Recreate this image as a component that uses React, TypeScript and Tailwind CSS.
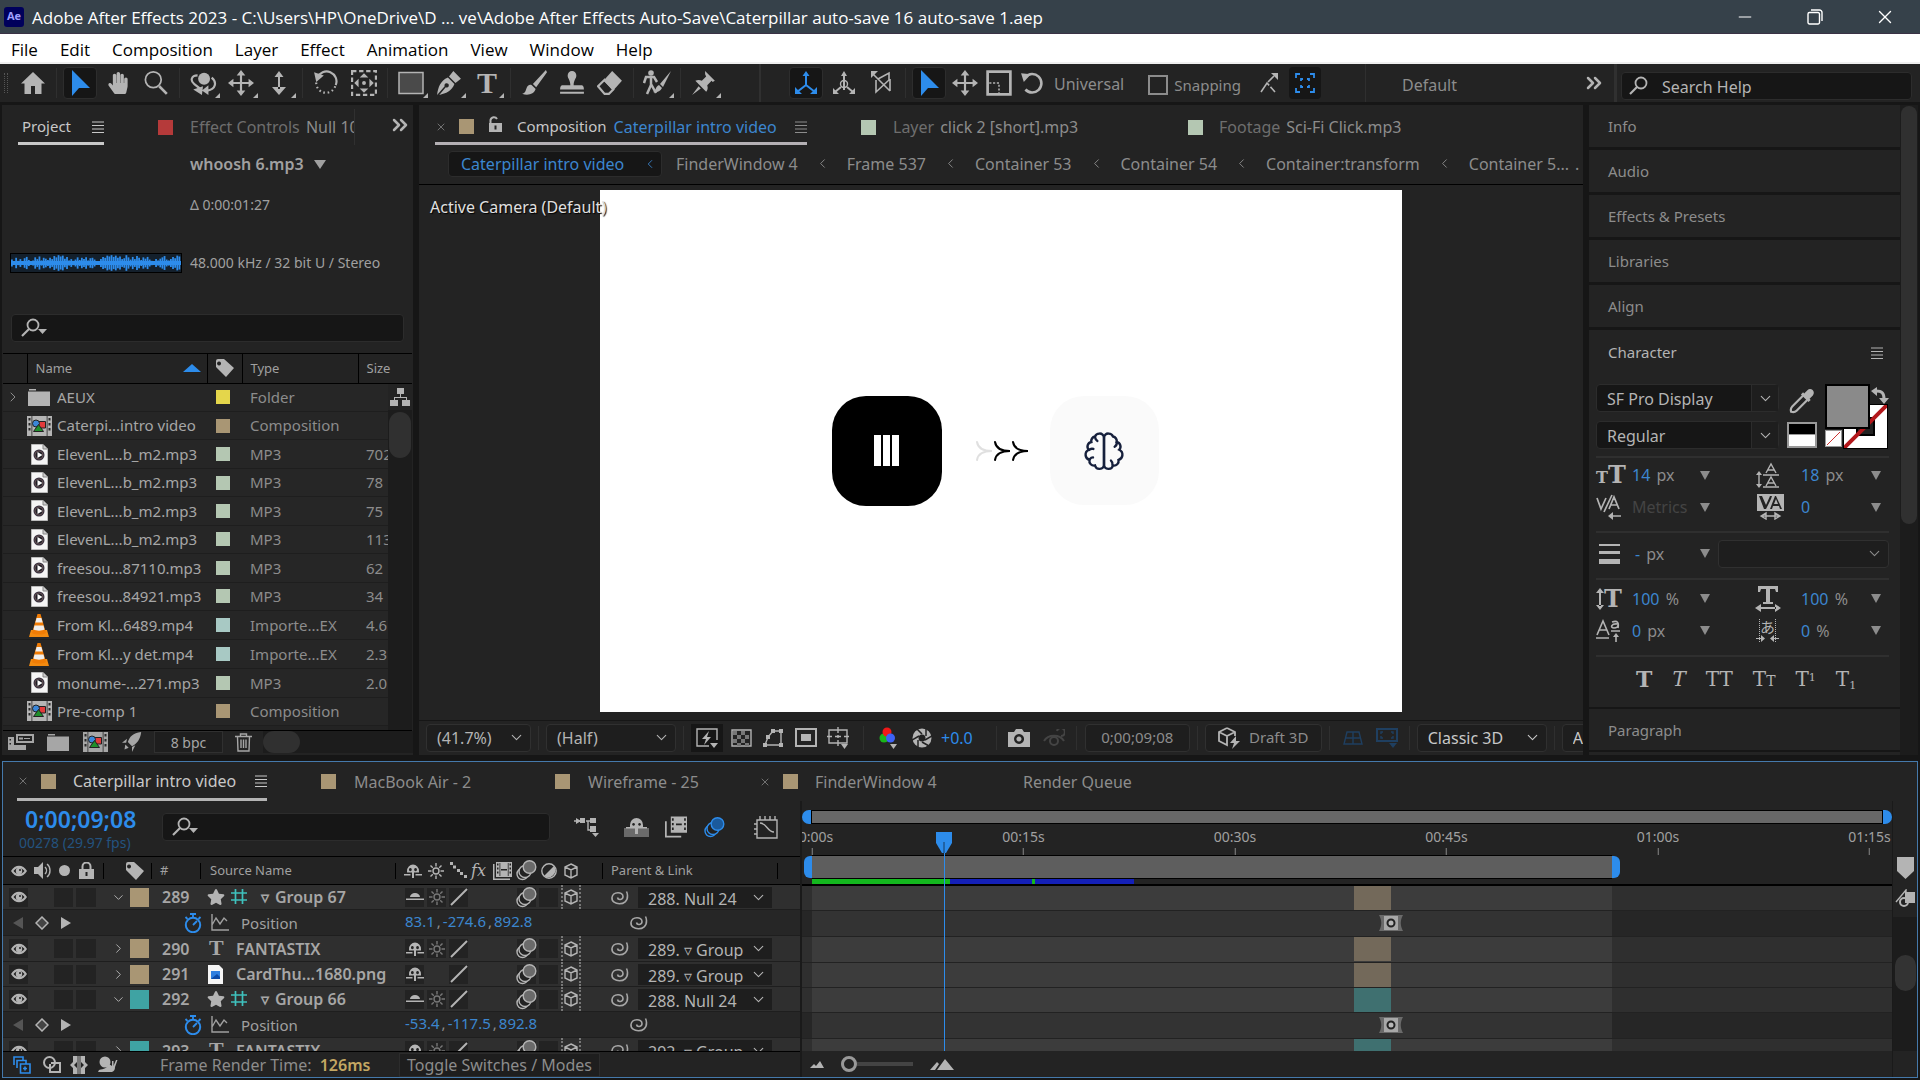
import React from 'react';
import { ChevronDown, ChevronLeft, ChevronRight, ChevronsRight, Minus, X } from 'lucide-react';
import { FaHandPaper, FaStar } from 'react-icons/fa';

type SvgProps = { w?: number; h?: number; box?: string; className?: string; children: React.ReactNode };

const Svg = ({ w = 24, h = w, box = '0 0 24 24', className = '', children }: SvgProps) => (
  <svg width={w} height={h} viewBox={box} fill="currentColor" className={`shrink-0 ${className}`} aria-hidden="true">
    {children}
  </svg>
);

const line = { fill: 'none', stroke: 'currentColor', strokeWidth: 2 };
const thin = { fill: 'none', stroke: 'currentColor', strokeWidth: 1.4 };

/* ---------- icons ---------- */

const ArrowIcon = () => (
  <Svg w={24} h={26} box="0 0 24 26">
    <path d="M4 0v26l7-8h11z" />
  </Svg>
);
const RotateIcon = () => (
  <Svg w={26} h={26}>
    <path d="M5 6.5A8.5 8.5 0 1 1 5 18" {...line} strokeWidth="2.4" />
    <path d="M1 3l9 1-6.500 7z" />
  </Svg>
);
const MoveIcon = () => (
  <Svg w={26} h={26}>
    <path d="M12 3v18M3 12h18" {...line} />
    <path d="M12 0l4 5H8zM12 24l4-5H8zM0 12l5-4v8zM24 12l-5-4v8z" />
  </Svg>
);
const SearchIcon = ({ menu = false }: { menu?: boolean }) => (
  <Svg w={28} h={20} box="0 0 28 20" className="text-[#b4b4b4]">
    <circle cx="13" cy="7" r="5.500" {...line} strokeWidth="1.800" />
    <path d="M9 11l-7 7" {...line} strokeWidth="2.200" />
    {menu && <path d="M18 11h9l-4.500 5z" />}
  </Svg>
);
const MenuIcon = () => (
  <Svg w={12} h={12} box="0 0 12 12">
    <path d="M0 .5h12v1H0zM0 4h12v1H0zM0 7.500h12v1H0zM0 11h12v1H0z" />
  </Svg>
);
const TagIcon = () => (
  <Svg w={20} h={20} box="0 0 20 20" className="text-[#b4b4b4]">
    <path fillRule="evenodd" d="M1 3a2 2 0 0 1 2-2h6l10 9-8 9L1 9zm3 .500a2 2 0 1 0 .1 0z" />
  </Svg>
);
const EyeIcon = () => (
  <Svg w={16} h={12} box="0 0 16 12">
    <path fillRule="evenodd" d="M0 6c4-7 12-7 16 0-4 7-12 7-16 0zm2.500 0c3 4 8 4 11 0-3-4-8-4-11 0z" />
    <circle cx="8" cy="6" r="3.200" />
    <circle cx="9" cy="5" r="1" fill="#222" />
  </Svg>
);
const LockIcon = () => (
  <Svg w={15} h={17} box="0 0 15 17">
    <path d="M3.500 8V4.500a4 4 0 0 1 8 0V8" {...line} />
    <path fillRule="evenodd" d="M0 7h15v10H0zm6.500 3v4h2v-4z" />
  </Svg>
);
const UnlockIcon = () => (
  <Svg w={15} h={17} box="0 0 15 17">
    <path d="M2.500 7V4a3.500 3.500 0 0 1 6.500-1" {...line} />
    <path fillRule="evenodd" d="M1 7h13v9H1zm5.500 2.500v4h2v-4z" />
  </Svg>
);
const ShyIcon = ({ down = false }: { down?: boolean }) =>
  down ? (
    <Svg w={18} h={16} box="0 0 18 16">
      <path d="M0 9.500h18V11H0zM4 8a5 4 0 0 1 10 0z" />
    </Svg>
  ) : (
    <Svg w={18} h={16} box="0 0 18 16">
      <path fillRule="evenodd" d="M3 8a6 6.500 0 0 1 12 0v1.500h-5V15H8V9.500H3zm3.300-3a1.400 1.600 0 1 0 .1 0zm5.200 0a1.400 1.600 0 1 0 .1 0z" />
      <path d="M0 11h6.500v1.500H0zM11.500 11H18v1.500h-6.500z" />
    </Svg>
  );
const SunIcon = () => (
  <Svg w={16} h={16} box="0 0 16 16">
    <circle cx="8" cy="8" r="3" {...thin} />
    <path d="M8 0v3.500M8 12.500V16M0 8h3.500M12.500 8H16M2.500 2.500l2.300 2.300M11.200 11.200l2.300 2.300M13.500 2.500l-2.300 2.300M4.800 11.200l-2.300 2.300" {...thin} />
  </Svg>
);
const SlashIcon = () => (
  <Svg w={18} h={18} box="0 0 18 18">
    <path d="M1 17L17 1" {...line} />
  </Svg>
);
const BlurIcon = ({ blue = false }: { blue?: boolean }) => (
  <Svg w={21} h={21} box="0 0 21 21">
    <circle cx="6.500" cy="14" r="5.500" {...thin} />
    <circle cx="9" cy="11.500" r="6" {...thin} fill="#222" />
    <circle cx="13.500" cy="7" r="6.300" {...thin} fill={blue ? '#1b5a9c' : '#6a6a6a'} />
  </Svg>
);
const CubeIcon = () => (
  <Svg w={16} h={16} box="0 0 16 16">
    <path d="M8 1l6 3v8l-6 3-6-3V4zM2 4l6 3 6-3M8 7v8" {...thin} />
  </Svg>
);
const FilmIcon = () => (
  <Svg w={19} h={18} box="0 0 19 18">
    <path d="M0 2h1.500v14.500H17V18H0z" />
    <path fillRule="evenodd" d="M3 0h16v15H3zm1 1.500v2h1.500v-2zm0 4v2h1.500v-2zm0 4v2h1.500v-2zM16.500 1.500v2H18v-2zm0 4v2H18v-2zm0 4v2H18v-2zM8 7v1.500h6V7z" />
    <path d="M6.500 1h.800v13h-.800zM14.800 1h.800v13h-.800z" fill="#232323" />
  </Svg>
);
const WhipIcon = () => (
  <Svg w={19} h={17} box="0 0 19 17" className="text-[#a6a6a6]">
    <path d="M7.500 8.500c.500 3 5.500 2.500 5.500-1C13 2.500 3 2 2 8.500 1 16.500 18 18 17.500 6.500c0-1.500-.5-3-1-4" {...thin} strokeWidth="1.600" />
  </Svg>
);
const FolderIcon = () => (
  <Svg w={22} h={17} box="0 0 22 17">
    <path d="M1 0h7v1.500H1zM0 2.500h22V17H0z" />
  </Svg>
);
const CompIcon = () => (
  <Svg w={25} h={20} box="0 0 25 20">
    <path d="M0 0h25v20H0z" />
    <path d="M1.500 2h2v2.500h-2zM1.500 7h2v2.500h-2zM1.500 12h2v2.500h-2zM21.500 2h2v2.500h-2zM21.500 7h2v2.500h-2zM21.500 12h2v2.500h-2zM4.500 0h.800v20h-.800zM19.700 0h.800v20h-.800z" fill="#2a2a2a" />
    <path d="M11 5.500h7.500V12H11z" fill="#e23b3b" stroke="#222" />
    <circle cx="9" cy="7.500" r="3.500" fill="#3a86d8" stroke="#222" />
    <path d="M11.500 8.500l5 7h-10z" fill="#1f8f2c" stroke="#222" />
  </Svg>
);
const Mp3Icon = () => (
  <Svg w={17} h={21} box="0 0 17 21">
    <path d="M.5.5H12L16.500 5v15.500H.5z" fill="#f5f5f5" stroke="#bbb" />
    <path d="M12 .5V5h4.500" fill="#ccc" stroke="#888" />
    <circle cx="8" cy="11" r="5.500" fill="#39323f" />
    <circle cx="8" cy="11" r="4" fill="#1f1f26" stroke="#8b6b6b" strokeWidth=".6" />
    <path d="M6.500 8l5 3-5 3z" fill="#fff" />
  </Svg>
);
const ConeIcon = () => (
  <Svg w={20} h={23} box="0 0 20 23">
    <path d="M2 16h16l2 7H0z" fill="#f28a10" />
    <path d="M8.500 0h3L17 19c-3 2-11 2-14 0z" fill="#f07c05" />
    <path d="M7.600 4h4.800l1.300 4.500H6.300zM5.500 11.500h9l1 4c-3 1.500-8 1.500-11 0z" fill="#eee" />
  </Svg>
);
const PngIcon = () => (
  <Svg w={15} h={19} box="0 0 15 19">
    <path d="M0 0h11l4 4v15H0z" fill="#f5f5f5" />
    <path d="M3 6h9v8H3z" fill="#2f7fe0" />
    <path d="M3 14l6-5 3 3v2z" fill="#0b4aa8" />
  </Svg>
);
const HashIcon = () => (
  <Svg w={16} h={16} box="0 0 16 16" className="text-[#3fc1bd]">
    <path d="M4.500 0v15M11.500 0v15M0 4h16M0 11h16" {...line} strokeWidth="1.700" />
  </Svg>
);
const StopwatchIcon = () => (
  <Svg w={18} h={20} box="0 0 18 20" className="text-[#2d8ceb]">
    <circle cx="9" cy="12" r="7.200" {...line} />
    <path d="M9 12l4-4M6 1h6M9 1v4M1.500 4l2 2M16.500 4l-2 2" {...line} strokeWidth="1.800" />
  </Svg>
);
const GraphIcon = () => (
  <Svg w={18} h={17} box="0 0 18 17">
    <path d="M1 0v16h17M1 11l4-7 4 6 4-6 3 3" {...thin} />
  </Svg>
);
const TypeIcon = ({ className = 'text-[20px]' }: { className?: string }) => (
  <span className={`font-['Liberation_Serif',serif] font-bold leading-none ${className}`}>T</span>
);
const Brain = () => (
  <Svg w={44} h={44} className="text-[#16203c]">
    <g fill="none" stroke="currentColor" strokeWidth="1.300" strokeLinecap="round">
      <path d="M9.500 2.500A2.300 2.300 0 0 1 12 4.700v14.800a2.500 2.500 0 0 1-4.900.4 2.500 2.500 0 0 1-3-3 3 3 0 0 1-.4-5.600 2.500 2.500 0 0 1 1.400-4.200 2.500 2.500 0 0 1 2-3A2.500 2.500 0 0 1 9.500 2.500z" />
      <path d="M14.500 2.500A2.300 2.300 0 0 0 12 4.700v14.800a2.500 2.500 0 0 0 4.900.4 2.500 2.500 0 0 0 3-3 3 3 0 0 0 .4-5.600 2.500 2.500 0 0 0-1.400-4.200 2.500 2.500 0 0 0-2-3A2.500 2.500 0 0 0 14.500 2.500z" />
      <path d="M7.100 4.500c.2 1 .6 1.600 1.300 2M3.700 11.500c.8-.7 1.600-.9 2.500-.6M4.200 16.500c.6-.7 1-1 1.800-1M19 7.200c.1 1.300-.3 2-1.200 2.500M16.600 19.500c.2-1-.1-1.700-.8-2.300" />
    </g>
  </Svg>
);

/* ---------- small shared parts ---------- */

const Swatch = ({ className }: { className: string }) => <span className={`inline-block size-[15px] shrink-0 ${className}`} />;
const Sep = ({ className = 'h-[30px]' }: { className?: string }) => <span className={`w-px shrink-0 bg-[#2f2f2f] ${className}`} />;

const Tool = ({ label, active, more, children }: { label: string; active?: boolean; more?: boolean; children: React.ReactNode }) => (
  <button aria-label={label} className="relative flex h-[34px] w-[38px] shrink-0 items-center justify-center">
    <span className={`flex h-8 w-[34px] items-center justify-center rounded-sm ${active ? 'border border-[#2d2d2d] bg-[#161616] text-[#2d8ceb]' : ''}`}>
      {children}
    </span>
    {more && (
      <Svg w={5} h={5} box="0 0 5 5" className="absolute right-0.5 bottom-0.5">
        <path d="M5 0v5H0z" />
      </Svg>
    )}
  </button>
);
const ToolSep = () => (
  <span className="flex w-[9px] shrink-0 justify-center">
    <Sep />
  </span>
);

const Drop = ({ label, value, className = '', split = false }: { label: string; value: string; className?: string; split?: boolean }) => (
  <span className={`relative flex items-center ${className}`}>
    <select aria-label={label} className="h-full w-full appearance-none overflow-hidden bg-transparent pr-7 pl-2.5 text-clip outline-none">
      <option>{value}</option>
    </select>
    <span
      className={`pointer-events-none absolute inset-y-0 right-0 flex w-[27px] items-center justify-center ${split ? 'border-l border-[#2c2c2c] bg-[#1e1e1e]' : ''}`}
    >
      <ChevronDown size={17} strokeWidth={1.5} />
    </span>
  </span>
);

/* ---------- title, menu, toolbar ---------- */

const menus = ['File', 'Edit', 'Composition', 'Layer', 'Effect', 'Animation', 'View', 'Window', 'Help'];

const TitleBar = () => (
  <header className="flex h-[34px] shrink-0 items-center border-b border-[#3a3245] bg-[#36414a] font-['Open_Sans','Noto_Sans',sans-serif] text-[17px] text-white">
    <span className="mr-2 ml-1 flex h-5 w-5 items-center justify-center rounded-[3px] bg-[#00005b] text-[11px] font-bold text-[#9f9fff]">Ae</span>
    <span className="pt-0.5 whitespace-nowrap">
      Adobe After Effects 2023 - C:\Users\HP\OneDrive\D ... ve\Adobe After Effects Auto-Save\Caterpillar auto-save 16 auto-save 1.aep
    </span>
    <div className="ml-auto flex items-center">
      <button aria-label="Minimize" className="flex w-[70px] justify-center"><Minus size={20} strokeWidth={1.2} /></button>
      <button aria-label="Restore" className="flex w-[70px] justify-center">
        <Svg w={16} h={16} box="0 0 16 16">
          <path d="M1 5a1.500 1.500 0 0 1 1.500-1.500H11A1.500 1.500 0 0 1 12.500 5v8.500A1.500 1.500 0 0 1 11 15H2.500A1.500 1.500 0 0 1 1 13.500zM4 1h8.500A2.500 2.500 0 0 1 15 3.500V12" {...thin} />
        </Svg>
      </button>
      <button aria-label="Close" className="flex w-[70px] justify-center"><X size={22} strokeWidth={1.5} /></button>
    </div>
  </header>
);

const MenuBar = () => (
  <nav className="flex h-[30px] shrink-0 items-center border-b-2 border-[#efefef] bg-white pt-1 font-['Open_Sans','Noto_Sans',sans-serif] text-[17px] text-black">
    {menus.map((m) => (
      <button key={m} className="px-[11px]">{m}</button>
    ))}
  </nav>
);

const Toolbar = () => (
  <div className="flex h-[38px] shrink-0 items-center bg-[#232323] text-[#b4b4b4]">
    <span className="mr-1.5 ml-1 h-5 w-1 border-x border-dotted border-[#555]" />
    <Tool label="Home">
      <Svg w={26} h={24}><path d="M12 1L0 12.500h3.500V23H10v-8h4v8h6.500V12.500H24z" /></Svg>
    </Tool>
    <ToolSep />
    <Tool label="Selection" active><ArrowIcon /></Tool>
    <Tool label="Hand"><FaHandPaper size={22} /></Tool>
    <Tool label="Zoom">
      <Svg w={26} h={26}>
        <circle cx="9.500" cy="9" r="7.300" {...line} strokeWidth="1.600" />
        <path d="M15 15l7 7" {...line} strokeWidth="2.400" />
      </Svg>
    </Tool>
    <ToolSep />
    <Tool label="Orbit" more>
      <Svg w={28} h={26}>
        <circle cx="13" cy="8" r="5.500" />
        <path d="M7 5C1 5 0 10 4 13l5 4M20 7c5 4 4 11-4 12" {...line} />
        <path d="M3 18l9-3-1 8zM17 14v9l-6-4z" />
      </Svg>
    </Tool>
    <Tool label="Pan camera" more><MoveIcon /></Tool>
    <Tool label="Dolly" more>
      <Svg w={24} h={26}>
        <path d="M11 4h2v14h-2zM12 0l4.500 6h-9zM12 24l7-8H5z" />
      </Svg>
    </Tool>
    <ToolSep />
    <Tool label="Rotate">
      <Svg w={26} h={26}>
        <path d="M4 7a9 9 0 0 1 17 7" {...line} />
        <path d="M20.500 15A9 9 0 0 1 3.500 9" {...line} strokeDasharray="1.500 2.500" />
        <path d="M1 2l9 3-7 6z" />
      </Svg>
    </Tool>
    <Tool label="Anchor point">
      <Svg w={28} h={26}>
        <path d="M1 1h22v22H1z" {...line} strokeDasharray="4 2.500" />
        <path d="M12 3l4 4H8zM12 21l4-4H8zM3 12l4-4v8zM21 12l-4-4v8z" />
        <circle cx="12" cy="12" r="1.800" />
      </Svg>
    </Tool>
    <ToolSep />
    <Tool label="Rectangle" more>
      <Svg w={26} h={24} box="0 0 26 24"><path d="M1 1.500h24v21H1z" fill="#4a4a4a" stroke="#b4b4b4" strokeWidth="1.500" /></Svg>
    </Tool>
    <Tool label="Pen" more>
      <Svg w={26} h={26}>
        <path fillRule="evenodd" d="M1 23C2 16 4 10 11 7l6 6c-2 6-8 9-14 10l6-7a2 2 0 1 0-1-1zM12 6l4-5 7 7-5 4z" />
      </Svg>
    </Tool>
    <Tool label="Type" more><TypeIcon className="text-[30px]" /></Tool>
    <ToolSep />
    <Tool label="Brush">
      <Svg w={26} h={26}>
        <path d="M23 0L11 13l3 3L24 2zM10 14l3.500 3.500C12 22 7 24 1 22c3-1 3-2 4-5s3-4 5-3z" />
      </Svg>
    </Tool>
    <Tool label="Clone stamp">
      <Svg w={26} h={26}>
        <path d="M12 1a4 4 0 0 1 4 4c0 3-2.500 4-2.500 9H21c1 0 2 1 2 4H1c0-3 1-4 2-4h7.500c0-5-2.500-6-2.500-9a4 4 0 0 1 4-4zM1 20h22v2H1z" />
      </Svg>
    </Tool>
    <Tool label="Eraser">
      <Svg w={26} h={26}>
        <path d="M14 1l9 9-8 9-9-9z" />
        <path d="M7 9l8 9-4 4H7l-6-7z" {...line} />
      </Svg>
    </Tool>
    <ToolSep />
    <Tool label="Roto brush" more>
      <Svg w={28} h={26} box="0 0 28 26">
        <circle cx="8" cy="3" r="2.800" />
        <path d="M1 13l2-6h8l3 5M8 7v8l-4 9M8 14l5 9" {...line} strokeWidth="2.500" />
        <path d="M28 1L17 14l3 3zM16 15l3 3c-2 4-6 5-9 4 3-1 2-5 6-7z" />
      </Svg>
    </Tool>
    <ToolSep />
    <Tool label="Puppet pin" more>
      <Svg w={26} h={26}>
        <path d="M13 1l9 9-2 1-1-1-4 4c1 3 0 5-1 6L4 10c2-1 4-1 6 0l4-4-1-2zM7 15l2 2-8 6z" />
      </Svg>
    </Tool>
    <span className="mr-[26px] ml-[36px] h-full w-0.5 shrink-0 bg-[#303030]" />
    <Tool label="Local axis" active>
      <Svg w={24} h={24}>
        <path d="M12 4v10l-9 7M12 14l9 7" {...line} />
        <path d="M12 0l3.500 5h-7zM1 16v7h7zM23 16v7h-7z" />
      </Svg>
    </Tool>
    <Tool label="World axis">
      <Svg w={24} h={24}>
        <path d="M12 4v6M9 16l-6 5M15 16l6 5" {...line} />
        <circle cx="12" cy="13" r="3.500" {...thin} />
        <path d="M12 0l3 5H9zM1 17v6h6zM23 17v6h-6zM11 10h2v9h-2z" />
      </Svg>
    </Tool>
    <Tool label="View axis">
      <Svg w={24} h={24}>
        <path d="M3 3l17 17M6 9v12l13-12V2L8 8M20 8v12" {...thin} strokeWidth="1.600" />
        <path d="M1 0h7L1 7z" />
      </Svg>
    </Tool>
    <ToolSep />
    <Tool label="Universal gizmo" active><ArrowIcon /></Tool>
    <button aria-label="Position gizmo" className="mx-1"><MoveIcon /></button>
    <button aria-label="Scale gizmo" className="mx-1">
      <Svg w={26} h={26}>
        <path d="M1.500 1.500h21v21h-21z" {...line} strokeWidth="2.500" />
        <path d="M3 12h9v10" {...thin} strokeDasharray="2 1.500" />
      </Svg>
    </button>
    <button aria-label="Rotation gizmo" className="mx-1"><RotateIcon /></button>
    <span className="ml-1 pt-0.5 text-base text-[#8c8c8c]">Universal</span>
    <span className="mx-3"><Sep /></span>
    <label className="flex items-center pt-1 text-[15px] text-[#8c8c8c]">
      <input type="checkbox" className="mr-1.5 size-5 appearance-none border-2 border-[#8c8c8c]" />
      Snapping
    </label>
    <button aria-label="Snap edges" className="ml-4">
      <Svg w={24} h={24}>
        <path d="M4 21l6-9 8 9M11 11l6-6" {...line} strokeWidth="1.600" strokeDasharray="14 2" />
        <path d="M14 2h7v7z" />
      </Svg>
    </button>
    <button aria-label="Snap features" className="ml-2 flex h-8 w-8 items-center justify-center rounded-sm bg-[#161616] text-[#2d8ceb]">
      <Svg w={20} h={20} box="0 0 20 20">
        <path d="M1 5V1h4M15 1h4v4M19 15v4h-4M5 19H1v-4M6 8V6h2M12 6h2v2M14 12v2h-2M8 14H6v-2" {...line} strokeWidth="1.800" />
      </Svg>
    </button>
    <span className="mr-[36px] ml-[44px]"><Sep className="block h-[38px]" /></span>
    <button className="pt-1 text-base text-[#8c8c8c]">Default</button>
    <button aria-label="More workspaces" className="ml-auto"><ChevronsRight size={24} strokeWidth={2.5} /></button>
    <span className="mr-1 ml-2 h-full w-[3px] bg-[#303030]" />
    <label className="mt-1.5 mr-2 flex h-7 w-[291px] items-center rounded-sm border border-[#2c2c2c] bg-[#161616] pl-1.5 text-[#b4b4b4]">
      <SearchIcon />
      <input aria-label="Search Help" placeholder="Search Help" className="ml-1.5 w-full bg-transparent pt-0.5 text-base outline-none placeholder:text-[#b4b4b4]" />
    </label>
  </div>
);

/* ---------- project panel ---------- */

const tan = 'bg-[#a99674]';
const sage = 'bg-[#b4c7b2]';
const aqua = 'bg-[#a8c9c4]';

const files = [
  { icon: <FolderIcon />, name: 'AEUX', color: 'bg-[#e4d64b]', type: 'Folder', size: '', open: true },
  { icon: <CompIcon />, name: 'Caterpi...intro video', color: tan, type: 'Composition', size: '' },
  { icon: <Mp3Icon />, name: 'ElevenL...b_m2.mp3', color: sage, type: 'MP3', size: '702' },
  { icon: <Mp3Icon />, name: 'ElevenL...b_m2.mp3', color: sage, type: 'MP3', size: '78' },
  { icon: <Mp3Icon />, name: 'ElevenL...b_m2.mp3', color: sage, type: 'MP3', size: '75' },
  { icon: <Mp3Icon />, name: 'ElevenL...b_m2.mp3', color: sage, type: 'MP3', size: '113' },
  { icon: <Mp3Icon />, name: 'freesou...87110.mp3', color: sage, type: 'MP3', size: '62' },
  { icon: <Mp3Icon />, name: 'freesou...84921.mp3', color: sage, type: 'MP3', size: '34' },
  { icon: <ConeIcon />, name: 'From Kl...6489.mp4', color: aqua, type: 'Importe...EX', size: '4.6' },
  { icon: <ConeIcon />, name: 'From Kl...y det.mp4', color: aqua, type: 'Importe...EX', size: '2.3' },
  { icon: <Mp3Icon />, name: 'monume-...271.mp3', color: sage, type: 'MP3', size: '2.0' },
  { icon: <CompIcon />, name: 'Pre-comp 1', color: tan, type: 'Composition', size: '' },
];

const wave = [8, 4, 12, 5, 9, 3, 11, 14, 7, 4, 6, 13, 9, 15, 6, 12, 10, 7, 12, 9, 16, 13, 18, 15, 17, 10, 14, 6, 9, 5, 8, 13, 7, 12, 9, 13, 6, 11, 12, 8, 4, 3, 9, 14, 12, 17, 15, 18, 14, 17, 12, 15, 9, 11, 18, 13, 8, 14, 9, 16, 12, 7, 13, 10, 14, 8, 5, 4, 9, 6, 10, 13, 16, 8, 6, 9, 14, 11, 17, 15];

const ProjectPanel = () => (
  <section className="flex w-[411px] shrink-0 flex-col bg-[#232323]">
    <div className="flex h-10 items-end pl-4">
      <div className="flex h-8 w-[86px] items-center justify-between border-b-3 border-[#c8c8c8] pb-0.5 pl-1 text-[15px] text-[#c8c8c8]">
        Project <MenuIcon />
      </div>
      <div className="flex h-9 w-[251px] items-center gap-[17px] overflow-hidden border-r border-[#303030] pl-[54px] text-base whitespace-nowrap text-[#8c8c8c]">
        <Swatch className="bg-[#b53a3a]" />
        <span className="text-[#6e6e6e]">Effect Controls <span className="ml-0.5 text-[#8c8c8c]">Null 10</span></span>
      </div>
      <button aria-label="More panels" className="mb-2 ml-[33px] text-[#b4b4b4]"><ChevronsRight size={24} strokeWidth={2.5} /></button>
    </div>
    <div className="h-[163px] pt-2 pl-[188px]">
      <div className="flex h-[22px] items-center gap-2.5 text-base font-semibold text-[#a0a0a0]">
        whoosh 6.mp3
        <Svg w={12} h={9} box="0 0 12 9"><path d="M0 0h12L6 9z" /></Svg>
      </div>
      <div className="mt-[19px] text-sm leading-[22px] text-[#a0a0a0]">Δ 0:00:01:27</div>
      <div className="-ml-[179px] mt-9 flex h-[22px] items-center gap-[9px] text-sm whitespace-nowrap text-[#a0a0a0]">
        <svg width="170" height="18" viewBox="0 0 170 18" className="shrink-0 bg-[#14202c] outline outline-black" aria-hidden="true">
          {wave.map((h, i) => (
            <path key={i} d={`M${i * 2.12} ${9 - h / 2.3}h1.800v${h / 1.15}h-1.800z`} fill="#2d8ceb" />
          ))}
          <path d="M0 7h170v4H0z" fill="#2d8ceb" />
        </svg>
        48.000 kHz / 32 bit U / Stereo
      </div>
    </div>
    <label className="mx-[9px] mt-1.5 flex h-7 items-center rounded-sm border border-[#2c2c2c] bg-[#161616] pl-2">
      <SearchIcon menu />
      <input aria-label="Search project" className="w-full bg-transparent outline-none" />
    </label>
    <div className="relative mx-px mt-[11px] min-h-0 flex-1 overflow-hidden border-y border-black">
      <table className="h-[372px] w-full table-fixed border-collapse text-left whitespace-nowrap">
        <colgroup>
          <col className="w-6" /><col className="w-[30px]" /><col className="w-[150px]" /><col className="w-[35px]" /><col className="w-[116px]" /><col />
        </colgroup>
        <thead>
          <tr className="h-[29px] border-b border-black text-[13px] text-[#a0a0a0]">
            <th />
            <th colSpan={2} className="border-l border-black pl-2 font-normal">
              <span className="flex items-center justify-between pr-1.5">
                Name
                <Svg w={18} h={8} box="0 0 18 8" className="text-[#2d8ceb]"><path d="M0 8l9-8 9 8z" /></Svg>
              </span>
            </th>
            <th className="border-l border-black pl-[7px]"><TagIcon /></th>
            <th className="border-l border-black pl-2 font-normal">Type</th>
            <th className="border-l border-black pl-2 font-normal">Size</th>
          </tr>
        </thead>
        <tbody>
          {files.map((f, i) => (
            <tr key={i} className="border-b border-[#1e1e1e] bg-[#262626] text-[15px]">
              <td className="pl-0.5">{f.open && <ChevronRight size={16} strokeWidth={1.5} />}</td>
              <td><span className="flex w-6 justify-center text-[#b4b4b4]">{f.icon}</span></td>
              <td className="overflow-hidden text-[#a6a6a6]">{f.name}</td>
              <td className="pl-[9px]"><span className={`block size-3.5 ${f.color}`} /></td>
              <td className="pl-2">{f.type}</td>
              <td className="pl-2">{f.size}</td>
            </tr>
          ))}
        </tbody>
      </table>
      <div className="absolute top-[30px] right-0 bottom-0 flex w-6 flex-col items-center bg-[#1c1c1c]">
        <Svg w={24} h={26} box="0 0 24 26" className="bg-[#232323] text-[#b4b4b4]">
          <path d="M9 4h7v6H9zM2 16h8v6H2zM14 16h8v6h-8zM12 10h1v4h-1zM6 13h13v1H6zM6 13h1v3H6zM18 13h1v3h-1z" />
        </Svg>
        <span className="mt-0.5 h-[46px] w-[22px] rounded-full bg-[#303030]" />
      </div>
    </div>
    <div className="flex h-6 shrink-0 items-start pl-1.5 text-[#a6a6a6] [&>*]:flex [&>*]:h-[22px] [&>*]:items-center">
      <button aria-label="Interpret footage" className="w-[31px]">
        <Svg w={26} h={18} box="0 0 26 18">
          <path fillRule="evenodd" d="M8 1h18v9H8zm2 2v5h14V3zm1 1.500h4v2h-4zm5 .500h6v1h-6z" />
          <path d="M0 4h6v8h12v5H0zm1.500 2v1.500H3V6zm0 4v1.500H3V10z" fillRule="evenodd" />
        </Svg>
      </button>
      <button aria-label="New folder" className="w-[37px] justify-center"><FolderIcon /></button>
      <button aria-label="New composition" className="w-[38px] justify-center"><CompIcon /></button>
      <button aria-label="Render" className="w-9 justify-center">
        <Svg w={20} h={20}><path d="M23 0C13 1 9 6 7 12l5 5c6-3 10-8 11-17zM6 8L0 13h5zM16 16l-4 8v-6zM4 15l4 4-5 2z" /></Svg>
      </button>
      <button className="mx-1 w-[69px] justify-center border border-[#303030] bg-[#1e1e1e] text-[14px]">8 bpc</button>
      <button aria-label="Delete" className="w-8 justify-center">
        <Svg w={17} h={19} box="0 0 17 19">
          <path d="M0 3.500h17M5.500 3V1h6v2M2.500 4l.5 14h11l.5-14M6 6.500v8.500M8.500 6.500v8.500M11 6.500v8.500" {...thin} />
        </Svg>
      </button>
      <span className="ml-1 flex-1 bg-[#1c1c1c]"><span className="h-[22px] w-[37px] rounded-full bg-[#303030]" /></span>
    </div>
  </section>
);

/* ---------- composition viewer ---------- */

const crumbs = ['FinderWindow 4', 'Frame 537', 'Container 53', 'Container 54', 'Container:transform', 'Container 5...'];
const boxed = 'h-7 shrink-0 rounded-sm border border-[#303030] bg-[#1e1e1e]';

const Viewer = () => (
  <section className="flex min-w-0 flex-1 flex-col overflow-hidden bg-[#232323]">
    <div className="flex h-10 shrink-0 items-end pl-4 text-base whitespace-nowrap">
      <div className="flex h-8 w-[372px] items-center border-b-3 border-[#b4b0b4] pb-0.5">
        <button aria-label="Close tab" className="mr-3"><X size={12} strokeWidth={1.5} /></button>
        <Swatch className={tan} />
        <span className="mx-3.5 pb-1 text-[#b4b4b4]"><UnlockIcon /></span>
        <span className="text-[15px] text-[#c8c8c8]">Composition</span>
        <span className="ml-[7px] text-[#3c86cf]">Caterpillar intro video</span>
        <span className="ml-auto"><MenuIcon /></span>
      </div>
      <div className="flex h-8 w-[327px] items-center pb-1 pl-[54px]">
        <Swatch className={sage} />
        <span className="ml-[17px] text-[#6e6e6e]">Layer</span><span className="ml-1.5">click 2 [short].mp3</span>
      </div>
      <div className="flex h-8 items-center pb-1 pl-[54px]">
        <Swatch className={sage} />
        <span className="ml-4 text-[#6e6e6e]">Footage</span><span className="ml-1.5">Sci-Fi Click.mp3</span>
      </div>
    </div>
    <nav className="flex h-10 shrink-0 items-center border-b border-black pt-1.5 pb-2 pl-[29px] text-base whitespace-nowrap">
      <a href="#root" className="flex h-[26px] w-[214px] shrink-0 items-center justify-between rounded-sm border border-[#2c2c2c] bg-[#161616] pr-1 pl-3 text-[#3c86cf]">
        Caterpillar intro video <ChevronLeft size={14} strokeWidth={1.5} />
      </a>
      {crumbs.map((c, i) => (
        <span key={c} className="flex items-center">
          {i > 0 && <ChevronLeft size={15} strokeWidth={1.5} className="-mr-px ml-[17px]" />}
          <a href="#root" className={i > 0 ? 'ml-[18px]' : 'ml-3.5'}>{c}</a>
        </span>
      ))}
      <span className="ml-1.5">.</span>
    </nav>
    <div className="relative flex min-h-0 flex-1 justify-center border-b border-[#161616] pt-[5px] pb-2">
      <span className="absolute top-[10px] left-[11px] text-base text-[#e0e0e0] [text-shadow:1px_1px_1px_#000]">Active Camera (Default)</span>
      <div className="flex aspect-[801/521] h-full items-center justify-center bg-white">
        <div className="mr-3 mb-px flex h-[110px] w-[327px] items-center justify-between">
          <span className="flex size-[110px] items-center justify-center gap-0.5 rounded-[34px] bg-black">
            <i className="h-[31px] w-[7px] bg-white" /><i className="h-[31px] w-[7px] bg-white" /><i className="h-[31px] w-[7px] bg-white" />
          </span>
          <Svg w={54} h={22} box="0 0 54 22" className="ml-[13px] text-black">
            <g fill="none" stroke="currentColor" strokeWidth="2" strokeLinecap="round">
              <path d="M2 2c1 6 5 9 15 9C7 11 3 14 2 20" opacity=".12" />
              <path d="M20 2c1 6 5 9 15 9-10 0-14 3-15 9M38 2c1 6 5 9 15 9-10 0-14 3-15 9" />
            </g>
          </Svg>
          <span className="flex size-[109px] items-center justify-center rounded-[34px] bg-[#fafafa]"><Brain /></span>
        </div>
      </div>
    </div>
    <div className="flex h-[34px] shrink-0 items-center gap-[7px] overflow-hidden pb-px pl-[7px] text-base whitespace-nowrap text-[#b4b4b4] [&>*]:shrink-0">
      <Drop label="Magnification" value="(41.7%)" className={`w-[105px] ${boxed}`} />
      <Sep className="h-6" />
      <Drop label="Resolution" value="(Half)" className={`w-[130px] ${boxed}`} />
      <Sep className="h-6" />
      <button aria-label="Fast previews" className="flex h-7 w-8 items-center justify-center bg-[#161616]">
        <Svg w={23} h={20} box="0 0 23 20">
          <path d="M13 18H1V1h20v11" {...thin} /><path d="M13 3L6 11h4l-2 6 7-8h-4zM14 15h8l-4 5z" />
        </Svg>
      </button>
      <button aria-label="Transparency grid" className="mx-px">
        <Svg w={21} h={18} box="0 0 21 18">
          <path d="M1 1h19v16H1z" {...thin} /><path d="M2 2h4v4H2zM10 2h4v4h-4zM6 6h4v4H6zM14 6h4v4h-4zM2 10h4v4H2zM10 10h4v4h-4zM6 14h4v3H6zM14 14h4v3h-4z" fill="#777" />
        </Svg>
      </button>
      <button aria-label="Mask visibility" className="mx-0.5">
        <Svg w={22} h={20} box="0 0 22 20">
          <path d="M3 17L6 9l5-6h8v14z" {...thin} /><path d="M1 15h4v4H1zM9 1h4v4H9zM17 1h4v4h-4zM17 15h4v4h-4zM4 7h4v4H4z" />
        </Svg>
      </button>
      <button aria-label="Region of interest" className="mx-0.5">
        <Svg w={22} h={19} box="0 0 22 19"><path d="M1 1h20v17H1z" {...line} /><path d="M6 6h10v7H6z" /></Svg>
      </button>
      <button aria-label="Guides" className="mx-px">
        <Svg w={22} h={22} box="0 0 22 22">
          <path d="M2 3h18v13H2zM11 0v6M11 13v6M0 9.500h5M17 9.500h5M8 9.500h6M11 8v3" {...thin} /><path d="M14 17h7l-3.500 5z" />
        </Svg>
      </button>
      <Sep className="mx-1.5 h-6" />
      <button aria-label="Channels" className="ml-px">
        <Svg w={20} h={22} box="0 0 20 22">
          <circle cx="6" cy="11" r="4.500" fill="#1ab51a" /><circle cx="9" cy="5" r="4.500" fill="#f01818" /><circle cx="12.500" cy="11" r="4.500" fill="#3d62f5" /><path d="M12 17h7l-3.500 5z" />
        </Svg>
      </button>
      <button aria-label="Reset exposure" className="ml-[7px]">
        <Svg w={20} h={20} box="0 0 20 20">
          <circle cx="10" cy="10" r="6.500" {...line} strokeWidth="6" />
          <path d="M4 0l6 6M14 0v8M20 8l-7 4M17 18l-7-4M6 20v-8M0 12l7-4" stroke="#232323" strokeWidth="1.500" />
        </Svg>
      </button>
      <button className="ml-0.5 text-base text-[#2d8ceb]">+0.0</button>
      <Sep className="ml-4 h-6" />
      <button aria-label="Take snapshot" className="ml-1">
        <Svg w={22} h={18} box="0 0 22 18"><path fillRule="evenodd" d="M0 3h6l2-3h6l2 3h6v15H0zm11 2a5 5 0 1 0 .1 0zm0 2.500a2.500 2.500 0 1 1-.1 0z" /></Svg>
      </button>
      <button aria-label="Show snapshot" className="ml-1.5 text-[#444]">
        <Svg w={22} h={18} box="0 0 22 18"><circle cx="11" cy="12" r="4" {...line} /><path d="M1 12c4-7 16-7 20 0M14 2a4 4 0 1 1 4 5" {...line} /></Svg>
      </button>
      <Sep className="mr-px ml-1 h-6" />
      <button className={`w-[105px] text-[15px] text-[#8c8c8c] ${boxed}`}>0;00;09;08</button>
      <Sep className="h-6" />
      <button className={`flex w-[117px] items-center justify-center gap-2 text-[15px] text-[#8c8c8c] ${boxed}`}>
        <Svg w={23} h={22} box="0 0 23 22" className="text-[#b4b4b4]"><path d="M9 1l8 4v4M9 1L1 5v9l8 4v-9l8-4M1 5l8 4" {...thin} strokeWidth="1.800" /><path d="M18 9l-6 7h4l-2 6 8-8h-4z" /></Svg>
        Draft 3D
      </button>
      <Sep className="h-6" />
      <button aria-label="3D ground plane" className="mx-1.5 text-[#1f3f60]"><Svg w={20} h={14} box="0 0 20 14"><path d="M4 1h12l3 12H1zM2 7h16M10 1v12" {...thin} /></Svg></button>
      <button aria-label="3D extended viewer" className="text-[#1f3f60]"><Svg w={22} h={20} box="0 0 22 20"><path d="M1 1h20v12H1z" {...line} /><path d="M5 6V4h2M15 4h2v2M17 8v2h-2M7 10H5V8" {...thin} /><path d="M13 15h8l-4 5z" /></Svg></button>
      <Sep className="ml-1 h-6" />
      <Drop label="3D renderer" value="Classic 3D" className={`w-[130px] text-[#c8c8c8] ${boxed}`} />
      <Sep className="h-6" />
      <Drop label="Camera view" value="Active Camera" className={`w-[150px] text-[#c8c8c8] ${boxed}`} />
    </div>
  </section>
);

/* ---------- right column ---------- */

const Tri = () => <Svg w={10} h={9} box="0 0 10 9" className="text-[#8c8c8c]"><path d="M0 0h10L5 9z" /></Svg>;

const Metric = ({ icon, value, unit, wide }: { icon: React.ReactNode; value: React.ReactNode; unit?: string; wide?: boolean }) => (
  <div className="flex h-8 items-center">
    <span className={`flex shrink-0 items-center text-[#b4b4b4] ${wide ? 'w-[46px]' : 'w-9'}`}>{icon}</span>
    <span className="flex-1 text-[#3c86cf]">{value} <span className="ml-0.5 text-[#8c8c8c]">{unit}</span></span>
    <Tri />
  </div>
);

const serif = "font-['DejaVu_Serif',serif]";

const glyphs = [
  <b className="text-[22px]">T</b>,
  <i>T</i>,
  <span>TT</span>,
  <span>T<small className="text-[14px]">T</small></span>,
  <span>T<sup className="text-[11px]">1</sup></span>,
  <span>T<sub className="text-[11px]">1</sub></span>,
];
const styleNames = ['Faux bold', 'Faux italic', 'All caps', 'Small caps', 'Superscript', 'Subscript'];

const CharacterPanel = () => (
  <div className="flex flex-col pr-[11px] pl-[7px]">
    <div className="flex h-[45px] items-center justify-between pr-1.5 pl-3 text-[15px] text-[#b4b4b4]">
      Character <MenuIcon />
    </div>
    <div className="flex h-[73px] pt-[9px]">
      <div className="flex w-[183px] flex-col gap-[9px] text-base text-[#b4b4b4]">
        {['SF Pro Display', 'Regular'].map((v) => (
          <Drop key={v} label={v} value={v} split className="h-7 rounded-sm border border-[#2c2c2c] bg-[#161616] pt-0.5" />
        ))}
      </div>
      <div className="ml-2 flex h-16 w-[30px] flex-col items-center justify-between pt-1">
        <Svg w={26} h={26} className="text-[#b4b4b4]">
          <path d="M14 6L3 17c-2 2-1 5-1 5s3 1 5-1L18 10" {...line} /><path d="M17 2c3-3 8 1 5 5l-3 3 1 1-2 2-7-7 2-2 1 1z" />
        </Svg>
        <span className="flex h-[26px] w-full flex-col border-2 border-[#999] bg-white"><i className="h-[11px] border-b border-[#999] bg-black" /></span>
      </div>
      {/* fill and stroke wells overlap each other */}
      <div className="relative ml-2 h-[66px] w-16">
        <span className="absolute top-5 left-[18px] size-[45px] border border-black bg-white">
          <Svg w={43} h={43} box="0 0 43 43"><path d="M13 13h17v17H13z" fill="#222" stroke="#000" strokeWidth="2" /><path d="M0 43L43 0" stroke="#b3171b" strokeWidth="4" /></Svg>
        </span>
        <span className="absolute top-0 left-0 size-[45px] border-2 border-black bg-[#8a8a8a]" />
        <Svg w={17} h={17} box="0 0 17 17" className="absolute top-[46px] left-0 bg-white"><path d="M0 0h17v17H0z" fill="#fff" stroke="#999" strokeWidth="2" /><path d="M2 15L15 2" stroke="#c33" /></Svg>
        <Svg w={18} h={17} box="0 0 18 17" className="absolute top-[3px] left-[46px] text-[#b4b4b4]"><path d="M5 4c6 0 8 2 8 8" {...line} strokeWidth="3" /><path d="M0 4l6-4v9zM8 11h10l-5 6z" /></Svg>
      </div>
    </div>
    <div className="mt-2 grid grid-cols-[114px_126px] justify-between border-t-2 border-[#2f2f2f] pt-px pr-2 text-base">
      <Metric icon={<span className={`${serif} text-[24px] font-bold`}><small className="text-[16px]">T</small>T</span>} value="14" unit="px" />
      <Metric wide icon={<Svg w={26} h={26} box="0 0 26 26"><path d="M4 13v10M8 13h16M8 25h16M11 11l5-9 5 9M11 24l5-9 5 9M13 8h6M13 21h6" {...thin} /><path d="M4 9l3 4H1zM4 26l3-4H1z" /></Svg>} value="18" unit="px" />
      <Metric icon={<Svg w={26} h={26} box="0 0 26 26"><path d="M1 4l4 11 5-11M8 18L16 1M13 15l5-12 5 12M15 11h6M14 22h11" {...thin} strokeWidth="1.700" /><path d="M12 22l5-4v8z" /></Svg>} value={<span className="text-[#444]">Metrics</span>} />
      <Metric wide icon={<Svg w={27} h={26} box="0 0 27 26" className="ml-0.5"><path fillRule="evenodd" d="M0 0h27v17H0zM2 2l5 13h2l5-10 1-3h-2l-4 9-4-9zm11 13h2l1-3h6l1 3h2L19 2h-1zm4-5l2-5 2 5z" /><path d="M5 22h17M4 22l5-3v6zM23 22l-5-3v6z" {...thin} /></Svg>} value="0" />
    </div>
    <div className="mt-2 flex h-[49px] items-center border-y-2 border-[#2f2f2f] pb-1 pl-[3px] text-base">
      <span className="w-8 text-[#b4b4b4]"><Svg w={21} h={20} box="0 0 21 20"><path d="M0 0h21v2H0zM0 7h21v3H0zM0 15h21v5H0z" /></Svg></span>
      <span className="flex-1 pl-1 text-[#3c86cf]">- <span className="ml-0.5 text-[#8c8c8c]">px</span></span>
      <Tri />
      <Drop label="Stroke style" value="" className="ml-2 h-7 w-[171px] rounded-sm border border-[#303030] bg-[#1e1e1e]" />
    </div>
    <div className="grid h-[77px] grid-cols-[114px_126px] content-center justify-between border-b-2 border-[#2f2f2f] pr-2 pb-1.5 text-base">
      <Metric icon={<><Svg w={8} h={22} box="0 0 8 22"><path d="M3 4h2v14H3zM4 0l4 5H0zM4 22l4-5H0z" /></Svg><span className={`${serif} text-[24px] font-bold`}>T</span></>} value="100" unit="%" />
      <Metric wide icon={<Svg w={26} h={26} box="0 0 26 26"><path d="M3 0h20v6h-2l-1-3h-5v13h3v2H8v-2h3V3H6L5 6H3zM5 21h16v2H5zM0 22l6-4v8zM26 22l-6-4v8z" /></Svg>} value="100" unit="%" />
      <Metric icon={<Svg w={24} h={24} box="0 0 24 24"><path d="M1 16L7 2l6 14M3 11h8M0 19h13M15 12h9M20 23v-7M16 3c6-2 7 1 6 6M22 5c-7-1-8 4-4 4 3 0 4-2 4-3" {...thin} strokeWidth="1.600" /><path d="M20 14l3 4h-6z" /></Svg>} value="0" unit="px" />
      <Metric wide icon={<span className="ml-1 flex flex-col items-center border-x border-dotted border-[#b4b4b4] font-['Noto_Sans_CJK_JP',sans-serif] text-[15px] leading-4">あ<Svg w={23} h={7} box="0 0 23 7" className="-mx-1"><path d="M0 3h5V0l4 3.500L5 7V4H0zM23 3h-5V0l-4 3.500L18 7V4h5z" /></Svg></span>} value="0" unit="%" />
    </div>
    <div className={`flex h-[50px] items-center gap-5 pb-1.5 pl-[40px] text-[20px] text-[#b4b4b4] ${serif}`}>
      {glyphs.map((g, i) => (
        <button key={i} aria-label={styleNames[i]} className="leading-none">{g}</button>
      ))}
    </div>
  </div>
);

const RightColumn = () => (
  <aside className="flex w-[329px] shrink-0">
    <div className="flex flex-1 flex-col bg-[#232323] text-[15px]">
      {['Info', 'Audio', 'Effects & Presets', 'Libraries', 'Align'].map((p) => (
        <button key={p} className="h-[45px] shrink-0 border-b-3 border-[#161616] pt-px pl-[19px] text-left">{p}</button>
      ))}
      <CharacterPanel />
      <button className="h-[45px] shrink-0 border-y-2 border-[#161616] pt-0.5 pl-[19px] text-left">Paragraph</button>
    </div>
    <div className="w-[18px] bg-[#1c1c1c] px-px pt-px"><div className="h-[418px] rounded-full bg-[#303030]" /></div>
  </aside>
);

/* ---------- timeline ---------- */

const SPAN = 76.6; // seconds visible in the track area
const at = (sec: number) => `${(sec / SPAN) * 100}%`;

const NOW = 9.37;
const WORK_END = 56.75;
const marks = [
  { t: 0, label: '00:00s' },
  { t: 15, label: '00:15s' },
  { t: 30, label: '00:30s' },
  { t: 45, label: '00:45s' },
  { t: 60, label: '01:00s' },
  { t: 75, label: '01:15s' },
];

const teal = 'bg-[#3fa3a3]';
type Layer = { id?: number; kind: 'shape' | 'text' | 'image' | 'prop'; name: string; color?: string; parent?: string; value?: string[] };

const layers: Layer[] = [
  { id: 289, kind: 'shape', name: 'Group 67', color: tan, parent: '288. Null 24' },
  { kind: 'prop', name: 'Position', value: ['83.1', '-274.6', '892.8'] },
  { id: 290, kind: 'text', name: 'FANTASTIX', color: tan, parent: '289. ▿ Group 67' },
  { id: 291, kind: 'image', name: 'CardThu...1680.png', color: tan, parent: '289. ▿ Group 67' },
  { id: 292, kind: 'shape', name: 'Group 66', color: teal, parent: '288. Null 24' },
  { kind: 'prop', name: 'Position', value: ['-53.4', '-117.5', '892.8'] },
  { id: 293, kind: 'text', name: 'FANTASTIX', color: teal, parent: '292. ▿ Group 66' },
];

const rowHeight = { shape: 'h-[25px]', prop: 'h-[26px]', text: 'h-[26px]', image: 'h-[25px]' };

const Cell = ({ children, dark = true, w = 'w-[19px]' }: { children?: React.ReactNode; dark?: boolean; w?: string }) => (
  <span className={`mr-[3px] flex h-[19px] shrink-0 items-center justify-center ${w} ${dark ? 'bg-[#232323]' : ''}`}>{children}</span>
);

const PropRow = ({ layer }: { layer: Layer }) => (
  <div className={`flex items-center border-b border-[#1e1e1e] bg-[#262626] ${rowHeight.prop}`}>
    <span className="flex w-[165px] items-center gap-3 pl-2.5">
      <Svg w={10} h={12} box="0 0 10 12" className="text-[#555]"><path d="M10 0v12L0 6z" /></Svg>
      <Svg w={14} h={14} box="0 0 14 14"><path d="M7 1l6 6-6 6-6-6z" fill="#444" stroke="#b4b4b4" strokeWidth="1.500" /></Svg>
      <Svg w={10} h={12} box="0 0 10 12" className="text-[#b4b4b4]"><path d="M0 0v12l10-6z" /></Svg>
    </span>
    <button aria-label="Keyframe toggle" className="mr-[9px] ml-4"><StopwatchIcon /></button>
    <span className="text-[#a0a0a0]"><GraphIcon /></span>
    <span className="ml-3 w-[160px] pt-0.5 text-[15px] text-[#a0a0a0]">{layer.name}</span>
    <span className="ml-1 w-[224px] pb-0.5 text-[15px] text-[#3c86cf]">
      {layer.value!.map((v, i) => (
        <React.Fragment key={i}>{i > 0 && <span className="mx-0.5 text-[#8c8c8c]">,</span>}{v}</React.Fragment>
      ))}
    </span>
    <WhipIcon />
  </div>
);

const LayerRow = ({ layer }: { layer: Layer }) => {
  const shape = layer.kind === 'shape';
  return (
    <div className={`flex items-center border-b border-[#1e1e1e] bg-[#2f2f2f] pl-1.5 text-[#b4b4b4] ${rowHeight[layer.kind]}`}>
      <Cell><EyeIcon /></Cell>
      <span className="w-[23px]" />
      <Cell />
      <Cell w="w-5" />
      <span className="ml-3 w-[19px]">
        {shape ? <ChevronDown size={15} strokeWidth={1.5} /> : <ChevronRight size={15} strokeWidth={1.5} />}
      </span>
      <span className={`size-[19px] shrink-0 ${layer.color}`} />
      <span className="ml-[13px] w-[45px] text-base font-semibold text-[#a6a6a6]">{layer.id}</span>
      <span className="flex w-[190px] items-center text-base font-semibold whitespace-nowrap text-[#a6a6a6]">
        {shape && (
          <>
            <span className="mr-1.5 text-[#b4b4b4]"><FaStar size={18} /></span>
            <HashIcon />
            <span className="mr-1.5 ml-3.5">▿</span>
          </>
        )}
        {layer.kind === 'text' && <span className="w-[29px] pl-0.5"><TypeIcon className="text-[22px]" /></span>}
        {layer.kind === 'image' && <span className="w-[29px] pl-px"><PngIcon /></span>}
        {layer.name}
      </span>
      <span className="ml-2 flex">
        <Cell><ShyIcon down={shape} /></Cell>
        <Cell dark={layer.kind !== 'image'}>{layer.kind !== 'image' && <span className="text-[#777]"><SunIcon /></span>}</Cell>
        <Cell><SlashIcon /></Cell>
        <span className="w-[46px]" />
        <Cell><BlurIcon /></Cell>
        <Cell />
      </span>
      <span className="flex h-full w-5 items-center justify-center border-x-2 border-dotted border-[#777]"><CubeIcon /></span>
      <span className="mr-[9px] ml-[29px]"><WhipIcon /></span>
      <Drop label={`Parent of ${layer.id}`} value={layer.parent!} className="h-[21px] w-[134px] bg-[#1e1e1e] text-base" />
    </div>
  );
};

const HeadSep = () => <span className="h-4 w-px bg-black" />;

const TrackKey = () => (
  <Svg w={24} h={16} box="0 0 24 16" className="-ml-3">
    <path d="M0 0h24c-3 5-3 11 0 16H0c3-5 3-11 0-16z" fill="#6a6a6a" />
    <path d="M5 1h14v14H5z" fill="#a8a8a8" />
    <circle cx="12" cy="8" r="3.500" fill="#b8b8b8" stroke="#222" strokeWidth="2" />
  </Svg>
);

const TrackRow = ({ layer }: { layer: Layer }) => {
  const prop = layer.kind === 'prop';
  return (
    <div className={`flex border-b border-[#222] pl-2.5 ${rowHeight[layer.kind]} ${prop ? 'bg-[#262626]' : 'bg-[#2f2f2f]'}`}>
      <div className="relative flex-1">
        <span className={`block h-full ${prop ? 'bg-[#333]' : 'bg-[#3c3c3c]'}`} style={{ width: at(WORK_END) }} />
        {prop ? (
          <span className="absolute top-1" style={{ left: at(41.05) }}><TrackKey /></span>
        ) : (
          <span className={`absolute top-0 h-6 ${layer.color === teal ? 'bg-[#3f7070]' : 'bg-[#73695a]'}`} style={{ left: at(38.46), width: at(2.6) }} />
        )}
      </div>
    </div>
  );
};

const TimelineTabs = () => (
  <div className="flex h-[39px] shrink-0 items-start pt-1 pl-3.5 text-base whitespace-nowrap">
    <div className="flex h-[35px] w-[250px] items-center border-b-3 border-[#b4b4b4] pb-0.5 text-[#c8c8c8]">
      <button aria-label="Close tab" className="mr-3 text-[#8c8c8c]"><X size={12} strokeWidth={1.5} /></button>
      <Swatch className={tan} />
      <span className="ml-[17px]">Caterpillar intro video</span>
      <span className="ml-auto"><MenuIcon /></span>
    </div>
    <div className="flex h-[33px] w-[234px] items-center gap-[18px] pb-0.5 pl-[54px]"><Swatch className={tan} />MacBook Air - 2</div>
    <div className="flex h-[33px] w-[258px] items-center gap-[18px] pb-0.5 pl-[54px]"><Swatch className={tan} />Wireframe - 25</div>
    <div className="flex h-[33px] w-[264px] items-center pb-0.5">
      <button aria-label="Close tab" className="mr-3"><X size={12} strokeWidth={1.5} /></button>
      <Swatch className={tan} />
      <span className="ml-[17px]">FinderWindow 4</span>
    </div>
    <div className="flex h-[33px] items-center pb-0.5">Render Queue</div>
  </div>
);

const Timeline = () => (
  <section className="mx-[2px] mb-0.5 flex shrink-0 flex-col border border-[#4579ab] bg-[#232323]">
    <TimelineTabs />
    <div className="flex">
      {/* layer outline */}
      <div className="flex w-[799px] shrink-0 flex-col border-r-2 border-[#1a1a1a]">
        <div className="flex h-[55px] items-start pr-3.5">
          <div className="w-[159px] pt-1 pl-4">
            <div className="pl-1.5 text-[23px] leading-[28px] font-semibold text-[#2d8ceb]">0;00;09;08</div>
            <div className="text-[14px] leading-[20px] whitespace-nowrap text-[#24537f]">00278 (29.97 fps)</div>
          </div>
          <label className="mt-3 flex h-7 w-[388px] items-center rounded-sm border border-[#2c2c2c] bg-[#161616] pl-2">
            <SearchIcon menu />
            <input aria-label="Search layers" className="w-full bg-transparent outline-none" />
          </label>
          <div className="mt-3 flex h-7 flex-1 items-center pl-6 text-[#b4b4b4]">
            <button aria-label="Mini flowchart"><Svg w={25} h={20} box="0 0 25 20"><path d="M0 4h8M12 4h10M14 4v9h8" {...thin} /><path d="M2 1l5 3-5 3zM6 1h5v5H6zM16 1h6v5h-6zM16 9h6v6h-6zM18 16h7l-3.500 4z" /></Svg></button>
            <button aria-label="Hide shy layers" className="ml-[25px]"><Svg w={25} h={20} box="0 0 25 20"><path d="M0 11h25v9H0z" fill="#6a6a6a" /><path fillRule="evenodd" d="M6 8a6.500 7 0 0 1 13 0v2h4v1.500h-9V17h-3v-5.500H2V10h4zm3.500-2a1.400 1.400 0 1 0 .1 0zm6 0a1.400 1.400 0 1 0 .1 0z" /></Svg></button>
            <button aria-label="Frame blending" className="ml-4"><Svg w={22} h={22} box="0 0 19 18"><path d="M0 4h1.500v12.500H14V18H0z" /><path fillRule="evenodd" d="M5 0h14v14H5zm1 1.500v2h1.500v-2zm0 4v2h1.500v-2zm0 4v2h1.500v-2zM16.500 1.500v2H18v-2zm0 4v2H18v-2zm0 4v2H18v-2zM9.500 6v1.500h5V6z" /></Svg></button>
            <button aria-label="Motion blur" className="ml-[17px] text-[#2d8ceb]"><BlurIcon blue /></button>
            <button aria-label="Graph editor" className="ml-[29px]"><Svg w={24} h={23} box="0 0 24 23"><path d="M3 4h20v18H3zM6 7c7 0 7 9 14 9M6 0v4M11 0v4M16 0v4M21 0v4M0 8h3M0 13h3M0 18h3" {...thin} /></Svg></button>
          </div>
        </div>
        <div className="flex h-[29px] items-center border-y border-black text-[13px] text-[#a0a0a0]">
          <span className="flex w-[100px] items-center gap-[7px] pl-2 text-[#b4b4b4]">
            <EyeIcon />
            <Svg w={18} h={17} box="0 0 18 17"><path d="M0 5h4l5-5v17l-5-5H0z" /><path d="M11 5c2 2 2 5 0 7M13 2c4 3 4 10 0 13" {...thin} /></Svg>
            <Svg w={11} h={11} box="0 0 11 11"><circle cx="5.500" cy="5.500" r="5.500" /></Svg>
            <span className="ml-0.5"><LockIcon /></span>
          </span>
          <HeadSep /><span className="w-[47px] pl-[21px]"><TagIcon /></span>
          <HeadSep /><span className="w-12 pl-2">#</span>
          <HeadSep /><span className="w-[194px] pl-[9px]">Source Name</span>
          <HeadSep />
          <span className="flex w-[206px] items-center pl-2 text-[#b4b4b4]">
            <span className="w-[22px]"><ShyIcon /></span>
            <span className="w-[22px] pl-0.5"><SunIcon /></span>
            <span className="w-[23px] pl-0.5"><Svg w={17} h={17} box="0 0 17 17"><path d="M0 0h3v3H0zM3 3.500h3v3H3zM7 7h3v3H7zM10 10h3v3h-3zM14 13h3v3h-3z" /></Svg></span>
            <span className="w-[22px] font-['DejaVu_Serif',serif] text-base leading-none italic">fx</span>
            <span className="w-[23px]"><FilmIcon /></span>
            <span className="w-[25px]"><BlurIcon /></span>
            <span className="w-[22px]"><Svg w={16} h={16} box="0 0 16 16"><circle cx="8" cy="8" r="7.200" {...thin} /><path d="M13 3A7.200 7.200 0 0 1 3 13z" /></Svg></span>
            <span><CubeIcon /></span>
          </span>
          <HeadSep /><span className="w-[174px] pl-2">Parent &amp; Link</span>
          <HeadSep />
        </div>
        <div className="h-[166px] overflow-hidden">
          {layers.map((l, i) => (l.kind === 'prop' ? <PropRow key={i} layer={l} /> : <LayerRow key={i} layer={l} />))}
        </div>
        <div className="flex h-[26px] items-center border-t border-black pl-2.5 text-base whitespace-nowrap">
          <button aria-label="Layer switches pane" className="w-[30px] text-[#2d8ceb]"><Svg w={18} h={18} box="0 0 18 18"><path d="M1 9V1h9v3M4 12V4.500h9V8M7.500 8H17v9H7.500zM12 10.500v4M10 12.500h4" {...thin} strokeWidth="1.600" /></Svg></button>
          <button aria-label="Transfer controls pane" className="w-[27px] text-[#b4b4b4]"><Svg w={18} h={17} box="0 0 18 17"><circle cx="6.500" cy="6.500" r="5.500" {...line} /><path d="M8 7h9v9H7V8" {...line} /></Svg></button>
          <button aria-label="In and out pane" className="w-7 text-[#b4b4b4]"><Svg w={18} h={18} box="0 0 18 18"><path d="M3 0h4v6l-3 3 3 3v6H3v-6L0 9l3-3zM15 0h-4v6l3 3-3 3v6h4v-6l3-3-3-3z" /><path d="M7 0h4v18H7z" fill="#777" /></Svg></button>
          <button aria-label="Render time pane" className="w-[62px] text-[#b4b4b4]"><Svg w={20} h={17} box="0 0 20 17"><circle cx="7" cy="6" r="5.500" /><path d="M1 14c5-1 8-2 10-6l3 2v-5h1.500v5L18 4h1.500L17 11c0 3-1 4-3 5H0z" /></Svg></button>
          <span>Frame Render Time: <b className="ml-1 font-semibold text-[#c3a762]">126ms</b></span>
          <button className="mr-[200px] ml-auto h-6 border border-[#2c2c2c] bg-[#1e1e1e] px-[7px] leading-[22px]">Toggle Switches / Modes</button>
        </div>
      </div>

      {/* ruler and tracks */}
      <div className="relative min-w-0 flex-1">
        <div className="mt-[9px] flex h-3.5">
          <span className="w-[9px] rounded-l-full bg-[#2d8ceb]" />
          <span className="flex-1 border border-black bg-[#686868]" />
          <span className="w-[9px] rounded-r-full bg-[#2d8ceb]" />
        </div>
        <div className="h-[31px] overflow-hidden pl-2.5">
          <div className="relative h-full text-sm text-[#a0a0a0]">
            {marks.map((m) => (
              <span key={m.t} className="absolute top-[3px] flex -translate-x-1/2 flex-col items-center gap-px leading-5" style={{ left: at(m.t) }}>
                {m.label}
                <i className="h-2.5 w-px bg-[#888]" />
              </span>
            ))}
          </div>
        </div>
        <div className="flex h-6 pl-2.5">
          <div className="relative flex-1">
            <span className="block h-full border-y border-black bg-[#5e5e5e]" style={{ width: at(WORK_END) }} />
            <span className="absolute top-px -left-2 h-[22px] w-2 rounded-l-md bg-[#2d8ceb]" />
            <span className="absolute top-px h-[22px] w-2 rounded-r-md bg-[#2d8ceb]" style={{ left: at(WORK_END) }} />
          </div>
        </div>
        <div className="flex h-[7px] border-b-2 border-black pl-2.5">
          <div className="flex flex-1">
            <i className="bg-[#14b81f]" style={{ width: at(9.8) }} />
            <i className="bg-[#1420b8]" style={{ width: at(5.8) }} />
            <i className="w-[3px] bg-[#14b81f]" />
            <i className="bg-[#1420b8]" style={{ width: at(7) }} />
          </div>
        </div>
        <div className="h-[165px] overflow-hidden">
          {layers.map((l, i) => <TrackRow key={i} layer={l} />)}
        </div>
        {/* playhead */}
        <div className="pointer-events-none absolute top-[31px] right-0 bottom-[26px] left-2.5">
          <div className="absolute top-0 bottom-0 flex w-4 -translate-x-1/2 flex-col items-center" style={{ left: at(NOW) }}>
            <Svg w={16} h={21} box="0 0 16 21" className="text-[#2d8ceb]"><path d="M0 0h16v11l-6 10H6L0 11z" /><path d="M8 10v11" stroke="#173a60" /></Svg>
            <span className="w-px flex-1 bg-[#2d8ceb]" />
          </div>
        </div>
        <div className="flex h-[26px] items-center pl-2 text-[#b4b4b4]">
          <Svg w={14} h={7} box="0 0 14 7"><path d="M0 7l4-4 2 2 4-5 4 7z" /></Svg>
          <input
            type="range"
            aria-label="Timeline zoom"
            min={0}
            max={100}
            defaultValue={0}
            className="mx-[17px] h-1 w-[72px] appearance-none bg-[#444] [&::-webkit-slider-thumb]:size-4 [&::-webkit-slider-thumb]:appearance-none [&::-webkit-slider-thumb]:rounded-full [&::-webkit-slider-thumb]:border-3 [&::-webkit-slider-thumb]:border-[#999] [&::-webkit-slider-thumb]:bg-[#232323]"
          />
          <Svg w={24} h={11} box="0 0 24 11"><path d="M0 11l7-8 2 2-4 6zM7 11l8-11 9 11z" /></Svg>
        </div>
      </div>

      {/* marker bin and scrollbar */}
      <div className="flex w-[25px] shrink-0 flex-col items-center border-l border-[#1a1a1a] text-[#b4b4b4]">
        <Svg w={17} h={22} box="0 0 17 22" className="mt-14"><path d="M0 0h17v14l-8.500 8L0 14z" /></Svg>
        <Svg w={20} h={18} box="0 0 20 18" className="mt-2.5"><path d="M1 13L11 1v11" {...thin} /><path d="M10 3h10v11H10z" /><circle cx="9" cy="13" r="4" {...line} /></Svg>
        <div className="mt-2.5 flex w-full flex-1 flex-col items-center bg-[#1c1c1c] pt-[38px]"><span className="h-9 w-[21px] rounded-full bg-[#333]" /></div>
        <div className="h-[26px]" />
      </div>
    </div>
  </section>
);

const App: React.FC = () => (
  <div className="flex h-screen flex-col overflow-hidden bg-[#161616] font-['Noto_Sans','Noto_Sans_CJK_JP',sans-serif] text-[15px] text-[#8c8c8c]">
    <TitleBar />
    <MenuBar />
    <Toolbar />
    <main className="mt-[3px] mb-1.5 flex min-h-0 flex-1 gap-1.5 px-0.5">
      <ProjectPanel />
      <Viewer />
      <RightColumn />
    </main>
    <Timeline />
  </div>
);

export default App;
